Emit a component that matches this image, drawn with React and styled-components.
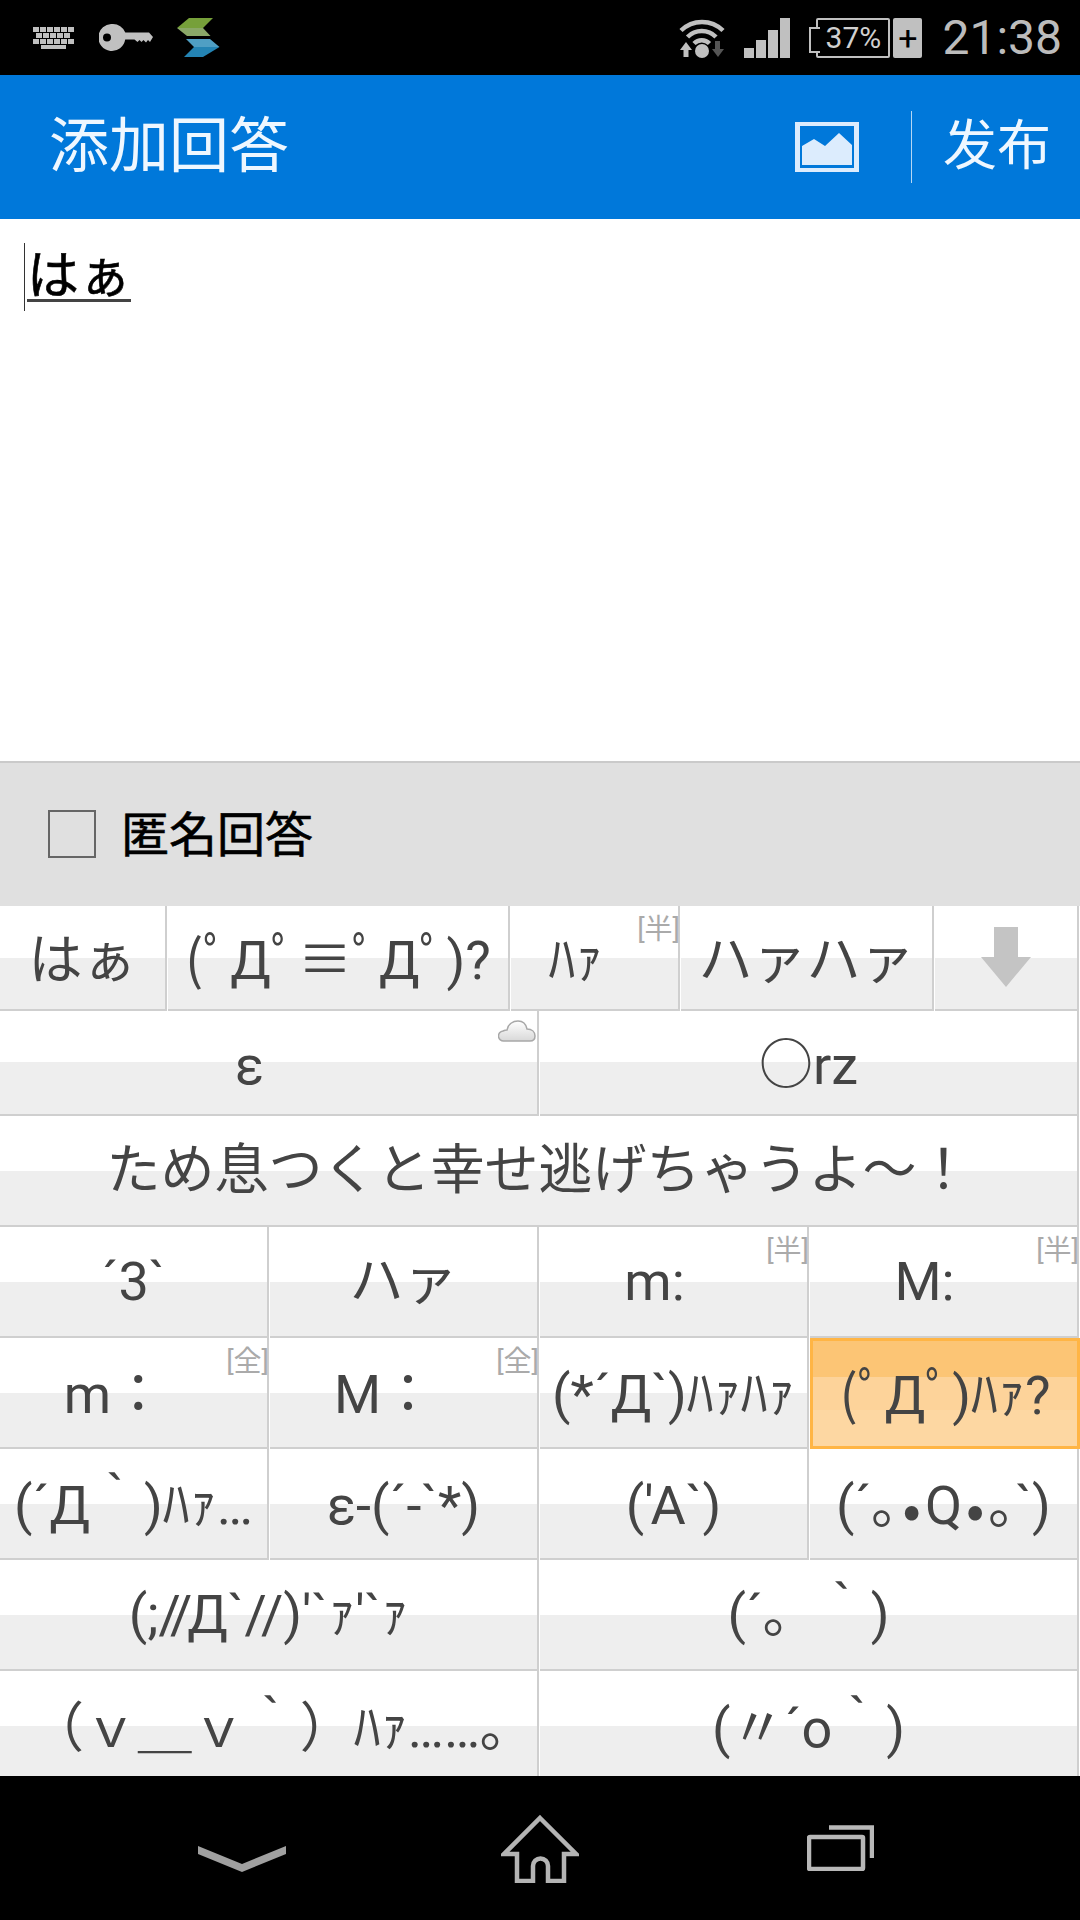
import React from "react";
import styled, { createGlobalStyle } from "styled-components";

const GlobalStyle = createGlobalStyle`
    html, body {
        margin: 0;
        padding: 0;
        background: #000;
    }
    * {
        box-sizing: border-box;
    }
`;

const Page = styled.div`
    width: 1080px;
    height: 1920px;
    display: flex;
    flex-direction: column;
    overflow: hidden;
    background: #fff;
    font-family: Roboto, "Noto Sans CJK JP", sans-serif;
`;

/* --------------------------------STATUS BAR-------------------------------------- */

const StatusBar = styled.div`
    height: 75px;
    flex: none;
    background: #000;
    display: flex;
    align-items: center;
    justify-content: space-between;
    padding: 0 18px 0 33px;
    color: #c0c0c0;
`;

const StatusGroup = styled.div`
    display: flex;
    align-items: center;
    gap: ${(props) => props.$gap}px;
`;

const Battery = styled.div`
    position: relative;
    width: 74px;
    height: 40px;
    margin-left: 7px;
    border: 2px solid #c0c0c0;
    border-radius: 2px;
    display: flex;
    align-items: center;
    justify-content: center;
    font-size: 30px;
    color: #d0d0d0;

    &::before {
        content: "";
        position: absolute;
        left: -9px;
        top: 7px;
        width: 9px;
        height: 22px;
        background: #000;
        border: 2px solid #c0c0c0;
        border-right: 0;
    }
`;

const Charging = styled.div`
    width: 29px;
    height: 40px;
    margin-left: -16px;
    border-radius: 2px;
    background: #c0c0c0;
    color: #000;
    font-size: 34px;
    font-weight: 400;
    display: flex;
    align-items: center;
    justify-content: center;
`;

const Clock = styled.div`
    margin-left: 1px;
    font-size: 48px;
    font-weight: 400;
    line-height: 48px;
    color: #bcbcbc;
`;

function KeyboardIcon() {
    const rows = [
        { y: 0, xs: [0, 7, 14, 21, 28, 35] },
        { y: 6, xs: [3, 10, 17, 24, 31] },
        { y: 12, xs: [0, 7, 14, 21, 28, 35] },
    ];
    return (
        <svg width="42" height="22" viewBox="0 0 42 22" fill="#c0c0c0">
            {rows.map((row) => row.xs.map((x) => <rect key={`${row.y}-${x}`} x={x} y={row.y} width="6" height="5" />))}
            <rect x="8" y="18" width="25" height="4" />
        </svg>
    );
}

function KeyIcon() {
    return (
        <svg width="54" height="27" viewBox="0 0 54 27" fill="#c0c0c0">
            <path
                fillRule="evenodd"
                d="M13.5 0a13.5 13.5 0 0 1 12.8 8.500H50l4 4.500-3 5-2-2-2 2.500-2.500-2.500-2 2-2-2-2 2-3-2.500H26.200A13.5 13.5 0 1 1 13.5 0zM8 9.500a4 4 0 1 0 0 8 4 4 0 0 0 0-8z"
            />
        </svg>
    );
}

function LogoIcon() {
    return (
        <svg width="43" height="39" viewBox="0 0 43 39">
            <path d="M12 0H36L26 10H0Z" fill="#76a03a" />
            <path d="M0 10H26L33.500 18H10Z" fill="#8aa868" />
            <path d="M9 21H33L42.500 29H17Z" fill="#4f9fc4" />
            <path d="M17 29H42.500L26 39H7Z" fill="#2484b4" />
        </svg>
    );
}

function WifiIcon() {
    return (
        <svg width="46" height="41" viewBox="0 0 46 41" fill="none">
            <path d="M2 13.500A30 30 0 0 1 44 13.500" stroke="#c0c0c0" strokeWidth="4.500" />
            <path d="M8.500 20A20 20 0 0 1 37 20" stroke="#c0c0c0" strokeWidth="4.500" />
            <path d="M15 26.500A11 11 0 0 1 30.500 26.500" stroke="#c0c0c0" strokeWidth="4.500" />
            <circle cx="23" cy="34" r="7" fill="#c0c0c0" />
            <path d="M7 25L13 33H9.500V40H4.500V33H1Z" fill="#c0c0c0" />
            <path d="M36 24H41V32H45L39 40L33 32H36Z" fill="#555" />
        </svg>
    );
}

function SignalIcon() {
    return (
        <svg width="46" height="40" viewBox="0 0 46 40" fill="#c0c0c0">
            <rect x="0" y="30" width="10" height="10" />
            <rect x="12" y="22" width="10" height="18" />
            <rect x="24" y="12" width="10" height="28" />
            <rect x="36" y="0" width="10" height="40" />
        </svg>
    );
}

/* --------------------------------APP BAR-------------------------------------- */

const AppBar = styled.div`
    height: 144px;
    flex: none;
    background: #0078da;
    display: flex;
    align-items: center;
    justify-content: space-between;
    padding: 0 29px 0 49px;
    color: #eef7ff;
    font-family: "Noto Sans CJK SC", sans-serif;
`;

const Title = styled.div`
    font-size: 60px;
    line-height: 70px;
    padding-bottom: 12px;
`;

const Actions = styled.div`
    display: flex;
    align-items: center;
`;

const Divider = styled.div`
    width: 1px;
    height: 72px;
    margin: 0 31px 0 52px;
    background: #b5d7f4;
`;

const Publish = styled.div`
    font-size: 54px;
    line-height: 70px;
    padding-bottom: 10px;
`;

function PictureIcon() {
    return (
        <svg width="64" height="50" viewBox="0 0 64 50" fill="#dcecfd">
            <path fillRule="evenodd" d="M0 0H64V50H0ZM5 4V46H59V4Z" />
            <path d="M7 24L19 17L30 24L44 11L57 23V43H7Z" />
        </svg>
    );
}

/* --------------------------------EDITOR-------------------------------------- */

const Editor = styled.div`
    height: 542px;
    flex: none;
    display: flex;
    align-items: flex-start;
    padding: 24px 0 0 24px;
    background: #fff;
`;

const Caret = styled.div`
    width: 1px;
    height: 68px;
    background: #333;
`;

const Composing = styled.div`
    margin: 2px 0 0 2px;
    height: 57px;
    font-family: "Noto Sans CJK JP", sans-serif;
    font-size: 52px;
    line-height: 54px;
    color: #000;
    -webkit-text-stroke: 0.6px #000;
    border-bottom: 3px solid #444;
`;

/* --------------------------------ANONYMOUS OPTION-------------------------------------- */

const OptionBar = styled.div`
    height: 145px;
    flex: none;
    background: #e0e0e0;
    border-top: 2px solid #cacaca;
    display: flex;
    align-items: center;
    gap: 25px;
    padding: 0 0 2px 48px;
`;

const CheckBox = styled.div`
    width: 48px;
    height: 48px;
    border: 2px solid #666;
`;

const OptionLabel = styled.div`
    font-family: "Noto Sans CJK JP", sans-serif;
    font-size: 48px;
    line-height: 56px;
    color: #000;
    -webkit-text-stroke: 0.6px #000;
    padding-bottom: 6px;
`;

/* --------------------------------CANDIDATE KEYS-------------------------------------- */

const Candidates = styled.div`
    flex: 1;
    min-height: 0;
    overflow: hidden;
    background: #fff;
`;

const KeyRow = styled.div`
    display: grid;
    grid-template-columns: ${(props) => props.$cols};
    height: ${(props) => props.$height}px;
`;

const Key = styled.div`
    position: relative;
    margin-right: 1px;
    padding-top: ${(props) => props.$top}px;
    padding-right: ${(props) => (props.$tagged ? 38 : 0)}px;
    border-right: 2px solid #cfcfcf;
    border-bottom: 2px solid #cfcfcf;
    background: linear-gradient(#fff 50%, #eee 50%);
    display: flex;
    align-items: center;
    justify-content: center;
    font-size: 54px;
    line-height: 60px;
    color: #444;
    white-space: pre;
`;

const ActiveKey = styled(Key)`
    margin-right: 0;
    border: 3px solid #ffb545;
    background: linear-gradient(#fcc575 34%, #fdd39a 34%, #fdd39a 66%, #fdd7a2 66%);
`;

const Tag = styled.span`
    position: absolute;
    top: 9px;
    right: -2px;
    font-size: 28px;
    line-height: 30px;
    color: #aaa;
`;

const Tight = styled.span`
    letter-spacing: -5px;
`;

const Bullet = styled.span`
    padding: 0 4px;
    font-family: "Noto Sans CJK JP", sans-serif;
`;

const Cloud = styled.svg`
    position: absolute;
    top: 9px;
    right: 1px;
`;

const Arrow = styled.svg`
    margin-top: -8px;
`;

function CloudIcon() {
    return (
        <Cloud width="38" height="22" viewBox="0 0 38 22">
            <defs>
                <linearGradient id="cloudFill" x1="0" y1="0" x2="0" y2="1">
                    <stop offset="0" stopColor="#fff" />
                    <stop offset="1" stopColor="#d8d8d8" />
                </linearGradient>
            </defs>
            <path
                d="M6 21A5 5 0 0 1 5 11C7 10 8 10 9 10C10 4 15 1 20 1C25 1 28 4 29 9C34 9 37 12 37 16C37 19 35 21 32 21Z"
                fill="url(#cloudFill)"
                stroke="#a8a8a8"
                strokeWidth="1.500"
            />
        </Cloud>
    );
}

function ArrowIcon() {
    return (
        <Arrow width="50" height="60" viewBox="0 0 50 60" fill="#c4c4c4">
            <path d="M13 0H37V30H50L25 60L0 30H13Z" />
        </Arrow>
    );
}

const keyRows = [
    {
        cols: "168px 343px 170px 254px 145px",
        height: 105,
        top: 6,
        keys: [
            { text: "はぁ" },
            { text: "(ﾟДﾟ≡ﾟДﾟ)?" },
            { text: "ﾊｧ", tag: "[半]" },
            { text: "ハァハァ" },
            { arrow: true },
        ],
    },
    {
        cols: "1fr 1fr",
        height: 105,
        top: 7,
        keys: [{ text: "ε", cloud: true }, { text: "○rz" }],
    },
    {
        cols: "1fr",
        height: 111,
        top: 0,
        keys: [{ text: "ため息つくと幸せ逃げちゃうよ～！" }],
    },
    {
        cols: "repeat(4, 1fr)",
        height: 111,
        top: 0,
        keys: [{ text: "´3`" }, { text: "ハァ" }, { text: "m:", tag: "[半]" }, { text: "M:", tag: "[半]" }],
    },
    {
        cols: "repeat(4, 1fr)",
        height: 111,
        top: 4,
        keys: [
            { text: "m：", tag: "[全]" },
            { text: "M：", tag: "[全]" },
            { text: "(*´Д`)ﾊｧﾊｧ" },
            { text: "(ﾟДﾟ)ﾊｧ?", active: true },
        ],
    },
    {
        cols: "repeat(4, 1fr)",
        height: 111,
        top: 4,
        keys: [
            { text: "(´Д｀)ﾊｧ…" },
            { text: "ε-(´-`*)" },
            { text: "('A`)" },
            {
                text: (
                    <>
                        (´｡<Bullet>•</Bullet>Q<Bullet>•</Bullet>｡`)
                    </>
                ),
            },
        ],
    },
    {
        cols: "1fr 1fr",
        height: 111,
        top: 0,
        keys: [
            {
                text: (
                    <>
                        (;<Tight>//</Tight>Д`//)'`ｧ'`ｧ
                    </>
                ),
            },
            { text: "(´｡  ｀)" },
        ],
    },
    {
        cols: "1fr 1fr",
        height: 111,
        top: 6,
        keys: [{ text: "（ｖ＿ｖ｀）ﾊｧ……｡" }, { text: "(〃´ο｀)" }],
    },
];

/* --------------------------------NAVIGATION BAR-------------------------------------- */

const NavBar = styled.div`
    height: 144px;
    flex: none;
    background: #000;
    display: grid;
    grid-template-columns: repeat(3, 300px);
    justify-content: center;
    align-items: center;
    justify-items: center;
`;

const BackIcon = styled.svg`
    margin: 22px 0 0 4px;
`;

function HomeIcon() {
    return (
        <svg width="78" height="69" viewBox="0 0 78 69" fill="none" stroke="#b4b4b4" strokeWidth="4.500">
            <path d="M39 4L75 40H63V67H47V52A7.500 7.500 0 0 0 32 52V67H16V40H3Z" />
        </svg>
    );
}

function RecentsIcon() {
    return (
        <svg width="67" height="46" viewBox="0 0 67 46" fill="none" stroke="#b8b8b8" strokeWidth="4.500">
            <path d="M22 2.500H65V33" />
            <rect x="2" y="12" width="54" height="32" rx="1" />
        </svg>
    );
}

function App() {
    return (
        <Page>
            <GlobalStyle />
            <StatusBar>
                <StatusGroup $gap={24}>
                    <KeyboardIcon />
                    <KeyIcon />
                    <LogoIcon />
                </StatusGroup>
                <StatusGroup $gap={19}>
                    <WifiIcon />
                    <SignalIcon />
                    <Battery>37%</Battery>
                    <Charging>+</Charging>
                    <Clock>21:38</Clock>
                </StatusGroup>
            </StatusBar>
            <AppBar>
                <Title>添加回答</Title>
                <Actions>
                    <PictureIcon />
                    <Divider />
                    <Publish>发布</Publish>
                </Actions>
            </AppBar>
            <Editor>
                <Caret />
                <Composing>はぁ</Composing>
            </Editor>
            <OptionBar>
                <CheckBox />
                <OptionLabel>匿名回答</OptionLabel>
            </OptionBar>
            <Candidates>
                {keyRows.map((row, i) => (
                    <KeyRow key={i} $cols={row.cols} $height={row.height}>
                        {row.keys.map((item, j) => {
                            const Cell = item.active ? ActiveKey : Key;
                            return (
                                <Cell key={j} $top={row.top} $tagged={item.tag || item.cloud}>
                                    {item.text}
                                    {item.arrow && <ArrowIcon />}
                                    {item.tag && <Tag>{item.tag}</Tag>}
                                    {item.cloud && <CloudIcon />}
                                </Cell>
                            );
                        })}
                    </KeyRow>
                ))}
            </Candidates>
            <NavBar>
                <BackIcon width="88" height="26" viewBox="0 0 88 26" fill="#a0a0a0">
                    <path d="M0 0L44 18L88 0V8L44 26L0 8Z" />
                </BackIcon>
                <HomeIcon />
                <RecentsIcon />
            </NavBar>
        </Page>
    );
}

export default App;
